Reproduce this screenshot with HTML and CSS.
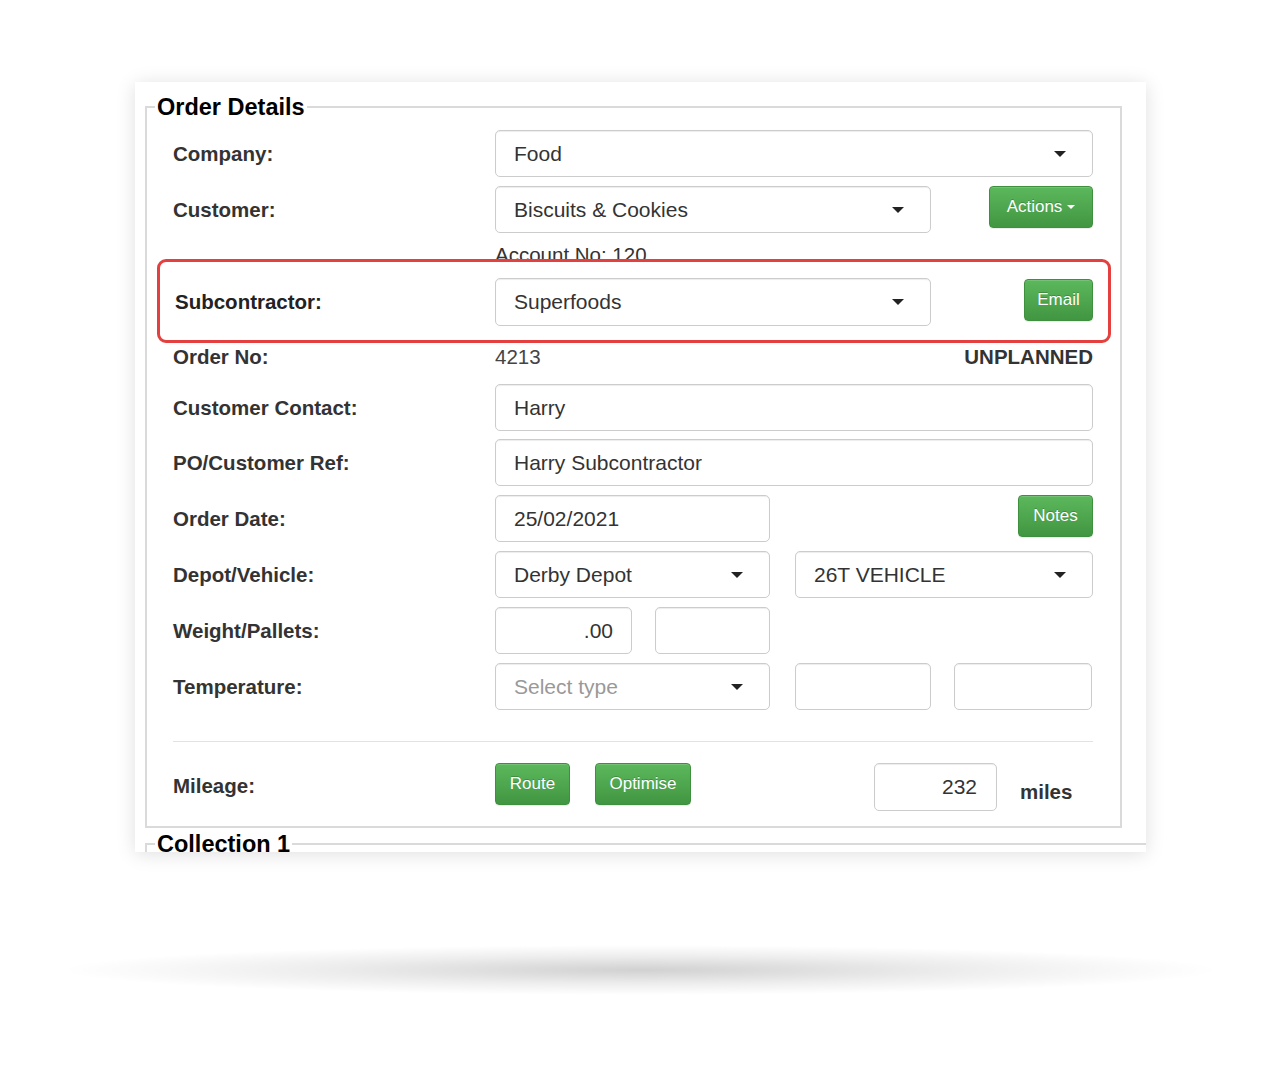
FILE: index.html
```html
<!DOCTYPE html>
<html>
<head>
<meta charset="utf-8">
<link rel="stylesheet" href="styles.css">
</head>
<body>
<div class="page">
  <div class="card">
    <fieldset class="fs">
      <legend class="lg">Order Details</legend>

      <div class="row mt9">
        <div class="lbl">Company:</div>
        <div class="ctl sel w-full"><span>Food</span><i class="caret"></i></div>
      </div>

      <div class="row mt9">
        <div class="lbl">Customer:</div>
        <div class="ctl sel w-436"><span>Biscuits &amp; Cookies</span><i class="caret"></i></div>
        <button class="btn btn-actions">Actions <i class="wcaret"></i></button>
      </div>

      <div class="account">Account No: 120</div>

      <div class="highlight">
        <div class="row">
          <div class="lbl lbl-sub">Subcontractor:</div>
          <div class="ctl sel w-436 tall"><span>Superfoods</span><i class="caret"></i></div>
          <button class="btn btn-email">Email</button>
        </div>
      </div>

      <div class="row orderno">
        <div class="lbl">Order No:</div>
        <div class="val">4213</div>
        <div class="status">UNPLANNED</div>
      </div>

      <div class="row mt15">
        <div class="lbl">Customer Contact:</div>
        <div class="ctl w-full"><span>Harry</span></div>
      </div>

      <div class="row mt8">
        <div class="lbl">PO/Customer Ref:</div>
        <div class="ctl w-full"><span>Harry Subcontractor</span></div>
      </div>

      <div class="row mt9">
        <div class="lbl">Order Date:</div>
        <div class="ctl w-275"><span>25/02/2021</span></div>
        <button class="btn btn-notes">Notes</button>
      </div>

      <div class="row mt9">
        <div class="lbl">Depot/Vehicle:</div>
        <div class="ctl sel w-275"><span>Derby Depot</span><i class="caret"></i></div>
        <div class="ctl sel w-298 gap25"><span>26T VEHICLE</span><i class="caret"></i></div>
      </div>

      <div class="row mt9">
        <div class="lbl">Weight/Pallets:</div>
        <div class="ctl num w-137"><span>.00</span></div>
        <div class="ctl w-115 gap23"></div>
      </div>

      <div class="row mt9">
        <div class="lbl">Temperature:</div>
        <div class="ctl sel w-275"><span class="ph">Select type</span><i class="caret"></i></div>
        <div class="ctl w-136 gap25"></div>
        <div class="ctl w-138 gap23"></div>
      </div>

      <div class="divider"></div>

      <div class="row mileage">
        <div class="lbl lbl-mile">Mileage:</div>
        <button class="btn btn-route">Route</button>
        <button class="btn btn-opt">Optimise</button>
        <div class="ctl num w-123 tall mile-input"><span>232</span></div>
        <div class="miles">miles</div>
      </div>
    </fieldset>

    <fieldset class="fs fs2">
      <legend class="lg">Collection 1</legend>
    </fieldset>
  </div>
  <div class="floor"></div>
</div>
</body>
</html>
```

FILE: styles.css
```css
* { box-sizing: border-box; }

html, body {
  margin: 0;
  padding: 0;
  background: #ffffff;
}

body {
  font-family: "Liberation Sans", Arial, sans-serif;
  color: #333333;
}

.page {
  padding-top: 82px;
  width: 1280px;
}

.card {
  margin-left: 135px;
  width: 1011px;
  height: 770px;
  background: #ffffff;
  overflow: hidden;
  box-shadow: 0 2px 18px rgba(0, 0, 0, 0.13);
}

.fs {
  margin: 11px 24px 0 10px;
  padding: 0 27px 15px 26px;
  border: 2px solid #dadada;
  min-width: 0;
}

.fs2 {
  margin: 2px -30px 0 10px;
  height: 60px;
}

.lg {
  font-size: 23.5px;
  font-weight: bold;
  line-height: 28px;
  color: #000000;
  padding: 0 2px;
  margin-left: -18px;
}

.row {
  display: flex;
  align-items: center;
}

.mt8 { margin-top: 8px; }
.mt9 { margin-top: 9px; }
.mt15 { margin-top: 15px; }

.lbl {
  width: 322px;
  flex: none;
  font-size: 20.5px;
  font-weight: bold;
  color: #333333;
}

.ctl {
  flex: none;
  height: 47px;
  border: 1px solid #cccccc;
  border-radius: 5px;
  box-shadow: inset 0 1px 1px rgba(0, 0, 0, 0.075);
  background: #ffffff;
  display: flex;
  align-items: center;
  padding: 0 18px;
  font-size: 21px;
  color: #333333;
}

.ctl.tall { height: 48px; }

.sel {
  justify-content: space-between;
  padding-right: 26px;
}

.num {
  justify-content: flex-end;
}

.ph { color: #999999; }

.caret {
  width: 0;
  height: 0;
  border-left: 6px solid transparent;
  border-right: 6px solid transparent;
  border-top: 6px solid #222222;
}

.w-full { width: 598px; }
.w-436 { width: 436px; }
.w-275 { width: 275px; }
.w-298 { width: 298px; }
.w-137 { width: 137px; }
.w-115 { width: 115px; }
.w-136 { width: 136px; }
.w-138 { width: 138px; }
.w-123 { width: 123px; }

.gap25 { margin-left: 25px; }
.gap23 { margin-left: 23px; }

.btn {
  flex: none;
  font-family: "Liberation Sans", Arial, sans-serif;
  font-size: 17px;
  color: #ffffff;
  height: 42px;
  border: 1px solid #3e8f3e;
  border-radius: 4px;
  background: linear-gradient(to bottom, #5cb85c 0%, #419641 100%);
  text-shadow: 0 -1px 0 rgba(0, 0, 0, 0.2);
  box-shadow: inset 0 1px 0 rgba(255, 255, 255, 0.15), 0 1px 1px rgba(0, 0, 0, 0.075);
  padding: 0;
  display: flex;
  align-items: center;
  justify-content: center;
}

.btn-actions {
  width: 104px;
  margin-left: auto;
  align-self: flex-start;
}

.wcaret {
  display: inline-block;
  margin-left: 5px;
  width: 0;
  height: 0;
  border-left: 4px solid transparent;
  border-right: 4px solid transparent;
  border-top: 4px solid #ffffff;
}

.btn-email {
  width: 69px;
  margin-left: auto;
  align-self: flex-start;
  margin-top: 1px;
}

.btn-notes {
  width: 75px;
  margin-left: auto;
  align-self: flex-start;
}

.account {
  margin-top: 11px;
  margin-left: 322px;
  height: 22px;
  line-height: 22px;
  font-size: 20.5px;
  color: #333333;
}

.highlight {
  position: relative;
  margin: -7px -18px 0 -16px;
  border: 3px solid #e3403f;
  border-radius: 9px;
  background: #ffffff;
  padding: 16px 15px 14px 15px;
}

.lbl-sub {
  width: 320px;
  color: #222222;
}

.orderno {
  margin-top: 2px;
  height: 24px;
}

.val {
  font-size: 20.5px;
  color: #444444;
}

.status {
  margin-left: auto;
  font-size: 20.5px;
  font-weight: bold;
  color: #333333;
}

.divider {
  margin-top: 31px;
  border-top: 1px solid #e2e2e2;
}

.mileage {
  margin-top: 21px;
  align-items: flex-start;
}

.lbl-mile {
  line-height: 46px;
}

.btn-route { width: 75px; }

.btn-opt {
  width: 96px;
  margin-left: 25px;
}

.mile-input {
  margin-left: 183px;
  padding-right: 19px;
}

.miles {
  margin-left: 23px;
  margin-top: 17px;
  line-height: 24px;
  font-size: 20.5px;
  font-weight: bold;
  color: #333333;
}

.floor {
  margin-top: 93px;
  margin-left: 60px;
  width: 1160px;
  height: 50px;
  background: radial-gradient(closest-side, rgba(0, 0, 0, 0.18), rgba(0, 0, 0, 0.07) 55%, rgba(0, 0, 0, 0));
}
```
